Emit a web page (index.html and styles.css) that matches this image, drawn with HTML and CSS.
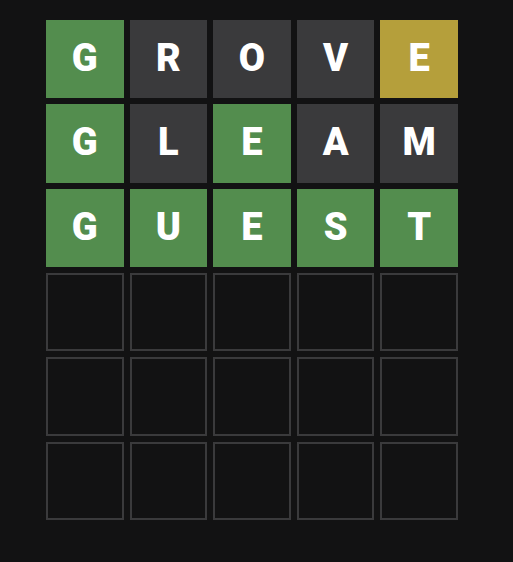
FILE: index.html
```html
<!DOCTYPE html>
<html>
<head>
<meta charset="utf-8">
<link rel="stylesheet" href="styles.css">
</head>
<body>
<div class="board">
  <div class="tile correct">G</div><div class="tile absent">R</div><div class="tile absent">O</div><div class="tile absent">V</div><div class="tile present">E</div>
  <div class="tile correct">G</div><div class="tile absent">L</div><div class="tile correct">E</div><div class="tile absent">A</div><div class="tile absent">M</div>
  <div class="tile correct">G</div><div class="tile correct">U</div><div class="tile correct">E</div><div class="tile correct">S</div><div class="tile correct">T</div>
  <div class="tile empty"></div><div class="tile empty"></div><div class="tile empty"></div><div class="tile empty"></div><div class="tile empty"></div>
  <div class="tile empty"></div><div class="tile empty"></div><div class="tile empty"></div><div class="tile empty"></div><div class="tile empty"></div>
  <div class="tile empty"></div><div class="tile empty"></div><div class="tile empty"></div><div class="tile empty"></div><div class="tile empty"></div>
</div>
</body>
</html>
```
FILE: styles.css
```css
html, body {
  margin: 0;
  background: #121213;
}
body {
  padding: 20px 0 0 46px;
  font-family: Roboto, "Liberation Sans", Arial, sans-serif;
}
.board {
  display: grid;
  grid-template-columns: repeat(5, 1fr);
  grid-template-rows: repeat(6, 1fr);
  gap: 6px;
  width: 412px;
  height: 500px;
}
.tile {
  box-sizing: border-box;
  display: flex;
  align-items: center;
  justify-content: center;
  padding-bottom: 2px;
  color: #ffffff;
  font-size: 38px;
  font-weight: 900;
  text-transform: uppercase;
}
.correct { background: #538d4e; }
.present { background: #b59f3b; }
.absent { background: #3a3a3c; }
.empty { border: 2px solid #3a3a3c; }
```
